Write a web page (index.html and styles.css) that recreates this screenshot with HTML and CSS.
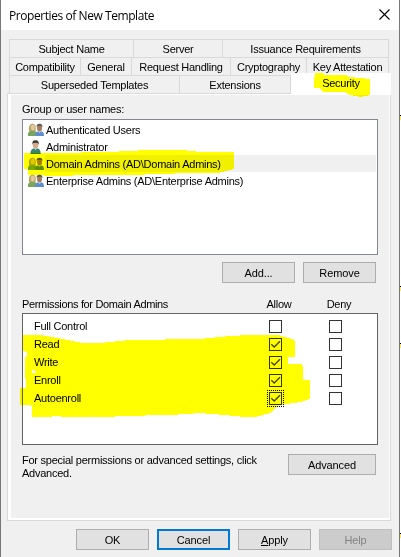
FILE: index.html
```html
<!DOCTYPE html>
<html lang="en">
<head>
<meta charset="utf-8">
<title>Properties of New Template</title>
<link rel="stylesheet" href="styles.css">
</head>
<body>
<svg class="defs" width="0" height="0" aria-hidden="true">
  <symbol id="group" viewBox="0 0 16 14">
    <path d="M0 13V10Q1 7.500 4 7.500L8 8.500 9 13Z" fill="#79a65c"/>
    <path d="M1 8Q0 1 4.500.5 9 1 7.500 8Z" fill="#b5a667"/>
    <ellipse cx="4.800" cy="4.500" rx="2" ry="3" fill="#e5c7a0"/>
    <path d="M7 13Q7 8.500 10 8.500H14Q16 9 16 13Z" fill="#5d8dcc"/>
    <ellipse cx="11.500" cy="5" rx="2.500" ry="3.600" fill="#a77c5b"/>
    <path d="M8.500 4Q8.500.7 11.500.7T14.500 4L13 2.800 9.500 3Z" fill="#5b5551"/>
    <path d="M10.500 8.500L11.500 10 13 8.500Z" fill="#c9d8ee"/>
  </symbol>
  <symbol id="user" viewBox="0 0 16 15">
    <path d="M2 15Q2 9 6 9H10Q13 9.500 13 15Z" fill="#39846f"/>
    <ellipse cx="7.500" cy="5" rx="3" ry="4" fill="#d5aa88"/>
    <path d="M4.200 5Q3.500.5 7.500.4 11.500.5 10.800 5L9.500 3 5 3.300Z" fill="#383433"/>
    <path d="M6.500 9L7.500 11 9 9Z" fill="#c8dcd6"/>
  </symbol>
  <symbol id="tick" viewBox="0 0 13 13"><path d="M2.300 6.200L5.200 9 11 3.200" fill="none" stroke="#444" stroke-width="1.300"/></symbol>
</svg>
<div class="window">
  <header class="title"><span class="t-title">Properties of New Template</span>
    <svg class="close" width="11" height="11" viewBox="0 0 11 11"><path d="M.5.5L10.500 10.500M10.500.5L.5 10.500" stroke="#000" stroke-width="1.100"/></svg>
  </header>
  <nav class="tabs">
    <div class="tabrow r1"><span class="tab">Subject Name</span><span class="tab">Server</span><span class="tab">Issuance Requirements</span></div>
    <div class="tabrow r2"><span class="tab">Compatibility</span><span class="tab">General</span><span class="tab">Request Handling</span><span class="tab">Cryptography</span><span class="tab">Key Attestation</span></div>
    <div class="tabrow r3"><span class="tab">Superseded Templates</span><span class="tab">Extensions</span><span class="tab active">Security</span></div>
  </nav>
  <main class="panel">
    <div class="label">Group or user names:</div>
    <div class="users">
      <div class="user"><svg class="ico"><use href="#group"/></svg><span>Authenticated Users</span></div>
      <div class="user"><svg class="ico"><use href="#user"/></svg><span>Administrator</span></div>
      <div class="user sel"><svg class="ico"><use href="#group"/></svg><span>Domain Admins (AD\Domain Admins)</span></div>
      <div class="user"><svg class="ico"><use href="#group"/></svg><span>Enterprise Admins (AD\Enterprise Admins)</span></div>
    </div>
    <div class="actions"><button>Add...</button><button>Remove</button></div>
    <div class="permhead"><span>Permissions for Domain Admins</span><span class="c">Allow</span><span class="c">Deny</span></div>
    <div class="perms">
      <div class="perm"><span>Full Control</span><i class="box"></i><i class="box"></i></div>
      <div class="perm"><span>Read</span><i class="box"><svg><use href="#tick"/></svg></i><i class="box"></i></div>
      <div class="perm"><span>Write</span><i class="box"><svg><use href="#tick"/></svg></i><i class="box"></i></div>
      <div class="perm"><span>Enroll</span><i class="box"><svg><use href="#tick"/></svg></i><i class="box"></i></div>
      <div class="perm"><span>Autoenroll</span><i class="box focus"><svg><use href="#tick"/></svg></i><i class="box"></i></div>
    </div>
    <div class="advanced"><p>For special permissions or advanced settings, click<br>Advanced.</p><button>Advanced</button></div>
  </main>
  <footer class="buttons"><button>OK</button><button class="default">Cancel</button><button><u>A</u>pply</button><button class="off">Help</button></footer>
</div>
<div class="edge"></div>
<svg class="marker" width="401" height="557" viewBox="0 0 401 557" shape-rendering="crispEdges">
  <path d="M315 73H322L324 75H346L349 77 360 78 370 79V95L360 97 350 95 345 92H323L320 88H314V81Z"/>
  <path d="M24 153H62L100 152 138 151V150H182L200 152H234V169L226 171 218 173H190L130 175H85L60 176 28 175V169H24Z"/>
  <path d="M23 335H40L52 337 62 339 73 341 82 343H100L130 340 200 339 230 336 250 335H278L292 339 295 342V357H288V364H302L303 367V380H310V399L300 402 280 405 275 408 270 413 255 417H245L225 415 200 413 170 415 120 416 110 417H70L52 416V417H32V407L30 405H20V388H26L25 370V357H27V352L23 351Z"/>
  <path class="gap" d="M32 370h2v1h2v2h-4z"/>
</svg>
</body>
</html>
```
FILE: styles.css
```css
* { box-sizing: border-box; }
body { margin: 0; width: 401px; height: 557px; overflow: hidden; background: #fff; display: flex; font: 11px/13px "Liberation Sans", Arial, sans-serif; letter-spacing: -.25px; color: #000; position: relative; }
.defs { position: absolute; }
.window { width: 400px; height: 557px; background: #f0f0f0; border: solid #777; border-width: 0 1px; }
.title { height: 30px; background: #fff; display: flex; justify-content: space-between; padding: 9px 9px 0 8px; }
.t-title { font: 12px/13px "Open Sans", sans-serif; letter-spacing: -.43px; }
.close { display: block; }
.tabs { margin: 9px 10px 0 8px; }
.tabrow { display: grid; height: 18px; border-left: 1px solid #d9d9d9; width: 380px; }
.r1 { grid-template-columns: 124px 89px 166px; }
.r2 { grid-template-columns: 71px 51px 99px 76px 82px; }
.r3 { grid-template-columns: 170px 111px 100px; }
.tab { border: solid #d9d9d9; border-width: 1px 1px 0 0; text-align: center; line-height: 19px; height: 18px; white-space: nowrap; }
.tab.active { background: #fff; border: 0; margin-top: -2px; height: 22px; line-height: 21px; position: relative; }
.panel { width: 384px; height: 428px; margin-left: 6px; border: 1px solid #d9d9d9; box-shadow: inset 3px 1px #fff, inset -1px -2px #fff; padding: 9px 0 0 14px; }
.label { height: 16px; }
.users { width: 356px; height: 136px; border: 1px solid #828790; background: #fff; padding: 1px; }
.user { height: 17px; display: flex; align-items: center; padding-left: 4px; }
.user span { flex: 1; margin-left: 1px; padding-left: 1px; line-height: 15px; padding-top: 2px; }
.sel span { background: #f0f0f0; }
.ico { width: 16px; height: 14px; }
.actions { display: flex; gap: 8px; margin: 7px 0 0 200px; }
button { font: inherit; letter-spacing: -.1px; width: 73px; height: 21px; padding: 1px 0 0; border: 1px solid #adadad; background: #e1e1e1; color: #000; text-align: center; }
.permhead { display: grid; grid-template-columns: 227px 60px 60px; margin-top: 14px; height: 16px; padding-top: 1px; }
.permhead span:first-child { letter-spacing: -.34px; }
.c { text-align: center; }
.perms { width: 356px; height: 132px; border: 1px solid #646464; background: #fff; padding-top: 3px; }
.perm { display: grid; grid-template-columns: 235px 60px 13px; height: 18px; align-items: center; padding-left: 11px; }
.box { display: block; width: 13px; height: 13px; border: 1px solid #333; }
.box svg { display: block; width: 13px; height: 13px; margin: -1px; }
.focus { outline: 1px dotted #000; outline-offset: 1px; }
.advanced { display: flex; margin-top: 9px; justify-content: space-between; width: 354px; }
.advanced p { margin: 0; }
.advanced button { width: 88px; }
.buttons { display: flex; gap: 8px; margin: 8px 0 0 75px; }
.default { border: 2px solid #0078d7; }
.off { background: #ccc; border-color: #bfbfbf; color: #838383; }
.edge { width: 1px; height: 557px; background: linear-gradient(#fff 115px, #000 115px 116px, #ffe96b 116px 120px, #fff 120px 286px, #000 286px 287px, #ffe96b 287px 291px, #fff 291px 343px, #000 343px 344px, #ffe96b 344px 348px, #fff 348px 533px, #000 533px 534px, #ffe96b 534px 538px, #fff 538px); }
.marker { position: absolute; left: 0; top: 0; fill: #ff0; mix-blend-mode: multiply; pointer-events: none; }
.gap { fill: #fff; }
```
